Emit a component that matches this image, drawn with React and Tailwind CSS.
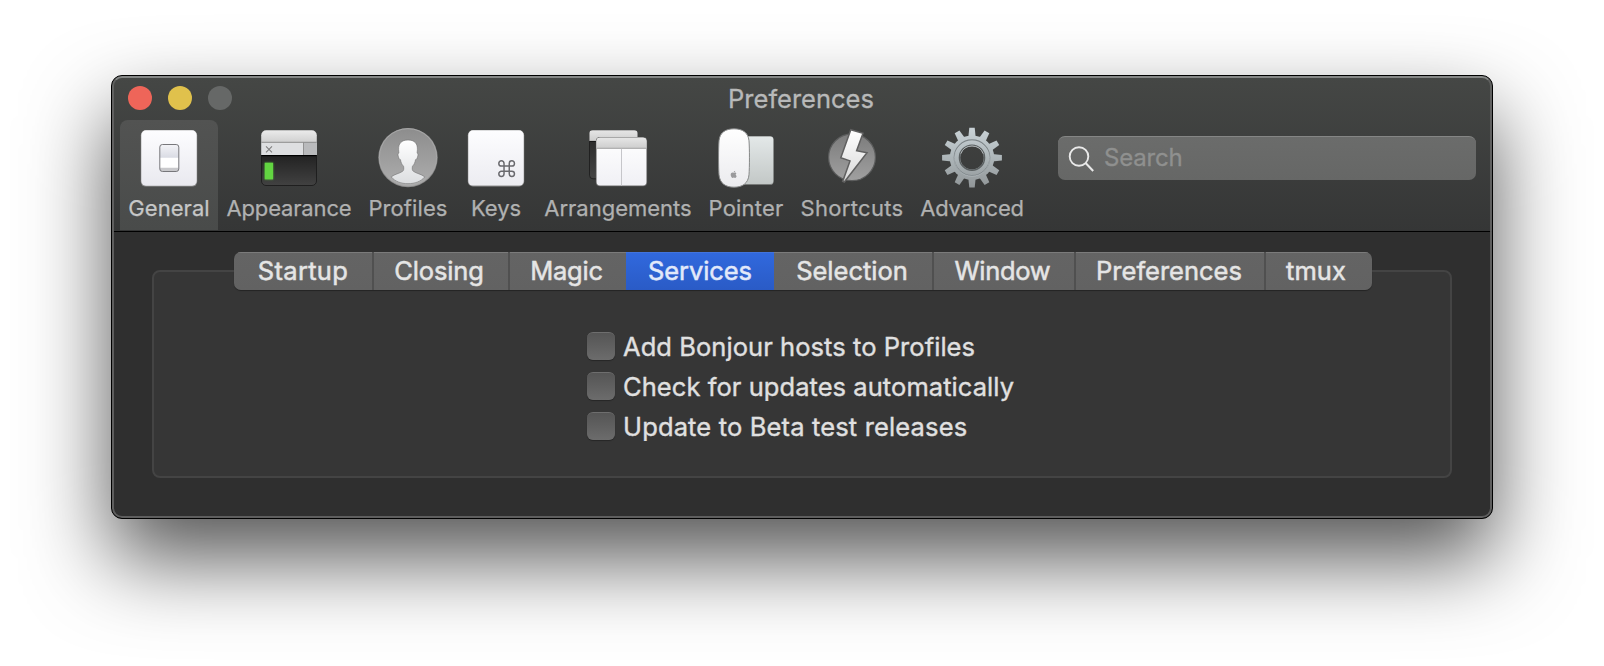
import React from "react";
import { FaApple } from "react-icons/fa";

function Gradient({ id, from, to }) {
  return (
    <linearGradient id={id} x1="0" y1="0" x2="0" y2="1">
      <stop offset="0" stopColor={from} />
      <stop offset="1" stopColor={to} />
    </linearGradient>
  );
}

function IconFrame({ children }) {
  return (
    <svg viewBox="0 0 60 60" className="block h-[60px] w-[60px] shrink-0 overflow-visible" aria-hidden="true">
      {children}
    </svg>
  );
}

function GeneralIcon() {
  return (
    <IconFrame>
      <defs>
        <Gradient id="gen-plate" from="#fdfdff" to="#e9e9ef" />
        <Gradient id="gen-top" from="#f4f4f8" to="#d9dbe3" />
      </defs>
      <rect x="1.8" y="2.2" width="56.4" height="56.4" rx="5" fill="#8f8f8f" />
      <rect x="2.3" y="2.3" width="55.4" height="55.4" rx="4.6" fill="url(#gen-plate)" />
      <rect x="20.8" y="16.5" width="19" height="27" rx="2.6" fill="#fff" />
      <path d="M20.8 29.8V19a2.5 2.5 0 0 1 2.5-2.5h14a2.5 2.5 0 0 1 2.5 2.5v10.800z" fill="url(#gen-top)" />
      <path d="M20.800 39.800h19V41a2.500 2.500 0 0 1-2.500 2.500h-14a2.500 2.500 0 0 1-2.500-2.500z" fill="#c9c9cc" />
      <rect x="20.8" y="16.5" width="19" height="27" rx="2.6" fill="none" stroke="#77777b" strokeWidth="1" />
    </IconFrame>
  );
}

function AppearanceIcon() {
  return (
    <IconFrame>
      <defs>
        <Gradient id="app-title" from="#ececec" to="#cfcfcf" />
        <Gradient id="app-term" from="#222222" to="#424242" />
        <clipPath id="app-clip">
          <rect x="2.2" y="2.3" width="55.6" height="55.4" rx="5" />
        </clipPath>
        <filter id="app-glow" x="-50%" y="-50%" width="200%" height="200%">
          <feGaussianBlur stdDeviation="1.2" />
        </filter>
      </defs>
      <g clipPath="url(#app-clip)">
        <rect x="2" y="2" width="56" height="12.5" fill="url(#app-title)" />
        <rect x="2" y="14" width="56" height="14" fill="#dedfe1" />
        <rect x="44.500" y="14" width="14" height="14" fill="#b9babc" />
        <rect x="2" y="13.800" width="56" height="1" fill="#8d8d8d" />
        <rect x="44" y="14" width="1" height="13" fill="#929292" />
        <rect x="2" y="27" width="56" height="31" fill="url(#app-term)" />
        <rect x="2" y="27" width="56" height="1.200" fill="#000" />
      </g>
      <path d="M7 18.300l6 6M13 18.300l-6 6" stroke="#808080" strokeWidth="1.100" />
      <rect x="5.700" y="34.700" width="8.400" height="16.700" fill="#5fdc3a" opacity="0.6" filter="url(#app-glow)" />
      <rect x="5.700" y="34.700" width="8.400" height="16.700" fill="#62d541" />
      <path d="M2.500 28v25a4.500 4.500 0 0 0 4.500 4.500h46a4.500 4.500 0 0 0 4.500-4.500V28" fill="none" stroke="#1c1c1c" strokeWidth="0.9" />
    </IconFrame>
  );
}

function ProfilesIcon() {
  return (
    <IconFrame>
      <defs>
        <Gradient id="pro-disc" from="#8d8d8d" to="#adadad" />
        <Gradient id="pro-head" from="#ffffff" to="#dcdee0" />
        <clipPath id="pro-clip">
          <circle cx="30" cy="29.300" r="27" />
        </clipPath>
      </defs>
      <circle cx="30" cy="29.600" r="29.700" fill="#8b8b8b" />
      <circle cx="30" cy="29.300" r="28.600" fill="url(#pro-disc)" stroke="#a8a8a8" strokeWidth="1" />
      <g clipPath="url(#pro-clip)">
        <path
          d="M30 12c-6.600 0-9.600 3.600-9.400 9.500l.3 3.600c-1.200.3-1 2.200-.4 4 .5 1.500 1 2.700 2 2.600.5 3 1.300 4.700 3 6.500.6 2.500.3 4.300-1.100 5.300-3 2-7.800 2.600-11.200 5.400C17 53.400 23 55.700 30 55.700s13-2.300 16.800-6.800c-3.400-2.800-8.200-3.400-11.200-5.400-1.400-1-1.700-2.800-1.100-5.300 1.700-1.800 2.500-3.500 3-6.500 1 .1 1.500-1.100 2-2.600.6-1.800.8-3.700-.4-4l.3-3.600c.2-5.900-2.800-9.500-9.400-9.500z"
          fill="url(#pro-head)"
          stroke="#747474"
          strokeWidth="0.6"
        />
      </g>
    </IconFrame>
  );
}

function KeysIcon() {
  return (
    <IconFrame>
      <defs>
        <Gradient id="key-plate" from="#fdfdff" to="#ececf1" />
      </defs>
      <rect x="1.800" y="2.200" width="56.400" height="56.200" rx="5" fill="#8f8f8f" />
      <rect x="2.300" y="2.300" width="55.400" height="55.200" rx="4.600" fill="url(#key-plate)" />
      <g transform="translate(30.200 30.200) scale(0.87)">
        <path
          d="M15 6v12a3 3 0 1 0 3-3H6a3 3 0 1 0 3 3V6a3 3 0 1 0-3 3h12a3 3 0 1 0-3-3"
          fill="none"
          stroke="#6a6a6e"
          strokeWidth="1.700"
        />
      </g>
    </IconFrame>
  );
}

function ArrangementsIcon() {
  return (
    <IconFrame>
      <defs>
        <Gradient id="arr-bar" from="#e6e6e6" to="#cdcdcd" />
        <Gradient id="arr-dark" from="#262626" to="#444444" />
        <Gradient id="arr-page" from="#ffffff" to="#f0f0f5" />
      </defs>
      <rect x="1.500" y="2.500" width="48" height="48.300" rx="3.500" fill="url(#arr-dark)" stroke="#1b1b1b" strokeWidth="0.8" />
      <path d="M1.400 13.200V5.500a3.300 3.300 0 0 1 3.300-3.300h41.600a3.300 3.300 0 0 1 3.300 3.300v7.700z" fill="url(#arr-bar)" />
      <rect x="1.400" y="12.900" width="48" height="1" fill="#111" />
      <rect x="7.900" y="8.900" width="51.200" height="49.400" rx="4" fill="#6f6f6f" />
      <rect x="8.600" y="9.700" width="49.800" height="47.800" rx="3.400" fill="url(#arr-page)" />
      <path d="M8.600 20.300v-7.200a3.400 3.400 0 0 1 3.400-3.400h43a3.400 3.400 0 0 1 3.400 3.400v7.200z" fill="url(#arr-bar)" />
      <rect x="8.600" y="19.800" width="49.800" height="1" fill="#a2a2a2" />
      <rect x="33" y="20.800" width="1" height="36.700" fill="#c6c6ca" />
    </IconFrame>
  );
}

function PointerIcon() {
  return (
    <IconFrame>
      <defs>
        <Gradient id="ptr-pad" from="#e3e8e8" to="#c3c8c7" />
        <Gradient id="ptr-mouse" from="#ffffff" to="#ebebee" />
      </defs>
      <rect x="18" y="8.200" width="39.600" height="48.600" rx="3.400" fill="#8c8f8e" />
      <rect x="18" y="8.400" width="39.300" height="47.600" rx="3.200" fill="url(#ptr-pad)" />
      <path
        d="M18 .8c8.500 0 14.200 3.700 15 12 .6 7 .6 27 0 34-.8 8.500-6.500 12.400-15 12.400S3.800 55.300 3 46.800c-.6-7-.6-27 0-34C3.800 4.500 9.500.8 18 .8z"
        fill="url(#ptr-mouse)"
        stroke="#868888"
        strokeWidth="1"
      />
      <FaApple x="13.600" y="42.200" size="8.200" color="#9a9a9c" />
    </IconFrame>
  );
}

function ShortcutsIcon() {
  return (
    <IconFrame>
      <defs>
        <Gradient id="sc-disc" from="#7c7c7c" to="#a0a0a0" />
        <Gradient id="sc-bolt" from="#ffffff" to="#d8d8d8" />
      </defs>
      <circle cx="30" cy="29.300" r="23.400" fill="url(#sc-disc)" stroke="#5c5d5d" strokeWidth="1.200" />
      <path
        d="M28.800 1.700L41 5.200 34.600 22.700 45 24.800 22.300 54 20.700 53.400 28 32.900 18.800 29.700z"
        fill="url(#sc-bolt)"
        stroke="#606060"
        strokeWidth="1.500"
      />
    </IconFrame>
  );
}

const teeth = Array.from({ length: 12 }, (_, i) => i * 30);

function AdvancedIcon() {
  return (
    <IconFrame>
      <defs>
        <linearGradient id="adv-metal" gradientUnits="userSpaceOnUse" x1="0" y1="0" x2="0" y2="60">
          <stop offset="0" stopColor="#c9d2d6" />
          <stop offset="0.45" stopColor="#b0b9bc" />
          <stop offset="1" stopColor="#909597" />
        </linearGradient>
        <mask id="adv-gear">
          <g fill="#fff">
            <circle cx="30" cy="29.700" r="22.300" />
            {teeth.map((a) => (
              <path key={a} d="M26.300 9.500L27.300-.2h5.400l1 9.700z" transform={`rotate(${a} 30 29.700)`} />
            ))}
          </g>
          <circle cx="30" cy="29.700" r="11.800" fill="#000" />
        </mask>
      </defs>
      <rect x="-1" y="-1" width="62" height="62" fill="url(#adv-metal)" mask="url(#adv-gear)" />
      <circle cx="30" cy="29.700" r="17.800" fill="none" stroke="#7d8588" strokeWidth="1.100" />
      <circle cx="30" cy="30.600" r="17.600" fill="none" stroke="#c2c9cc" strokeWidth="0.5" />
      <circle cx="30" cy="29.700" r="12.600" fill="none" stroke="#5b6061" strokeWidth="1.400" />
      <path d="M18.800 25.800a12 12 0 0 1 22.400 0" fill="none" stroke="#b5bbbd" strokeWidth="0.9" />
    </IconFrame>
  );
}

const toolbarItems = [
  { label: "General", Icon: GeneralIcon, width: "w-[98px]", tracking: "tracking-[0.05px]", selected: true },
  { label: "Appearance", Icon: AppearanceIcon, width: "w-[142px]", tracking: "tracking-[-0.15px]" },
  { label: "Profiles", Icon: ProfilesIcon, width: "w-[96px]", tracking: "tracking-[0.1px]" },
  { label: "Keys", Icon: KeysIcon, width: "w-[80px]", tracking: "tracking-[-0.1px]" },
  { label: "Arrangements", Icon: ArrangementsIcon, width: "w-[164px]", tracking: "tracking-[0px]" },
  { label: "Pointer", Icon: PointerIcon, width: "w-[92px]", tracking: "tracking-[0.2px]" },
  { label: "Shortcuts", Icon: ShortcutsIcon, width: "w-[120px]", tracking: "tracking-[0.3px]" },
  { label: "Advanced", Icon: AdvancedIcon, width: "w-[120px]", tracking: "tracking-[-0.2px]" },
];

const tabs = [
  { label: "Startup", box: "w-[140px] border-r-2 tracking-[0.3px]" },
  { label: "Closing", box: "w-[136px] border-r-2 pr-[4px] tracking-[-0.1px]" },
  { label: "Magic", box: "w-[116px] pr-[3px] tracking-[-0.2px]" },
  { label: "Services", box: "w-[148px] tracking-[-0.1px]", selected: true },
  { label: "Selection", box: "w-[160px] border-r-2 pr-[2px]" },
  { label: "Window", box: "w-[142px] border-r-2 pr-[3px] tracking-[-0.3px]" },
  { label: "Preferences", box: "w-[190px] border-r-2 pr-[2px]" },
  { label: "tmux", box: "w-[106px] pr-[6px] tracking-[0.1px]" },
];

const options = [
  { label: "Add Bonjour hosts to Profiles", tracking: "tracking-[0.06px]" },
  { label: "Check for updates automatically", tracking: "tracking-[0.06px]" },
  { label: "Update to Beta test releases", tracking: "tracking-[0.15px]" },
];

function Toolbar() {
  return (
    <header className="flex h-[156px] shrink-0 flex-col border-b border-black bg-linear-to-b from-[#454745] to-[#353636]">
      <div className="grid h-[44px] shrink-0 grid-cols-[1fr_auto_1fr] items-center">
        <div className="flex gap-4 pl-4">
          <span className="size-6 rounded-full bg-[#ee6559]" />
          <span className="size-6 rounded-full bg-[#e0c14c]" />
          <span className="size-6 rounded-full bg-[#666867]" />
        </div>
        <h1 className="pt-[2px] pr-[2px] text-[25.5px] leading-[30px] text-[#b8b9b9] [-webkit-text-stroke:0.3px]">Preferences</h1>
      </div>
      <div className="flex items-start justify-between pr-4 pl-2">
        <nav className="flex">
          {toolbarItems.map(({ label, Icon, width, tracking, selected }) => (
            <button
              key={label}
              className={`flex h-[110px] flex-col items-center pt-2 ${width} ${
                selected
                  ? "rounded-t-lg bg-linear-to-b from-[#525352] to-[#494b4a] text-[#c6c7c7]"
                  : "text-[#b0b1b1]"
              }`}
            >
              <Icon />
              <span className={`mt-2 text-[22px] leading-6 whitespace-nowrap [-webkit-text-stroke:0.25px] ${tracking}`}>{label}</span>
            </button>
          ))}
        </nav>
        <label className="mt-4 flex h-[44px] w-[418px] items-center rounded-[7px] border-t border-[#858685] bg-linear-to-b from-[#6b6c6b] to-[#666766] pb-[1px] pl-[10px]">
          <svg viewBox="0 0 28 28" className="size-7 shrink-0" fill="none" stroke="#e9e9e9" strokeWidth="1.900">
            <circle cx="11" cy="12.500" r="9.300" />
            <path d="M17.600 19.100l7.600 7.800" strokeWidth="2.100" />
          </svg>
          <span className="ml-[8px] pb-[1px] text-[24px] leading-[40px] tracking-[-0.2px] text-[#8f908f] [-webkit-text-stroke:0.3px]">Search</span>
        </label>
      </div>
    </header>
  );
}

export default function App() {
  return (
    <div className="flex h-[666px] w-[1604px] items-start overflow-hidden bg-white pt-[75px] pl-[111px] font-['Inter','Liberation_Sans',sans-serif]">
      <div className="relative flex h-[444px] w-[1382px] flex-col overflow-hidden rounded-[11px] border border-black bg-[#2f2f2f] shadow-[0_40px_84px_rgba(0,0,0,0.67)]">
        <Toolbar />
        <main className="flex flex-col px-10 pt-5">
          <div className="z-10 ml-[82px] flex h-[38px] self-start overflow-hidden rounded-[7px] bg-linear-to-b from-[#646464] to-[#626262] shadow-[0_1px_1px_rgba(0,0,0,0.35)]">
            {tabs.map(({ label, box, selected }) => (
              <button
                key={label}
                className={`flex h-[38px] items-center justify-center border-[#505050] text-[25.5px] leading-[38px] [-webkit-text-stroke:0.5px] ${box} ${
                  selected
                    ? "bg-linear-to-b from-[#3169de] to-[#2a5bc6] text-[#e2e9fa] shadow-[inset_0_1px_0_#4274dd]"
                    : "text-[#e5e5e5] shadow-[inset_0_1px_0_#7b7b7b]"
                }`}
              >
                {label}
              </button>
            ))}
          </div>
          <section className="-mt-5 h-[208px] rounded-[8px] border-2 border-[#444444] bg-[#363636] pt-[54px] pl-[433px]">
            {options.map(({ label, tracking }) => (
              <label key={label} className="flex h-10 items-center">
                <span className="size-7 rounded-[6px] border-t border-[#6e6e6e] bg-linear-to-b from-[#555555] to-[#6c6c6c] shadow-[0_1px_1px_rgba(0,0,0,0.3)]" />
                <span className={`ml-[8px] pt-[2px] text-[25.5px] leading-[38px] text-[#e0e0e0] [-webkit-text-stroke:0.35px] ${tracking}`}>{label}</span>
              </label>
            ))}
          </section>
        </main>
        <div className="pointer-events-none absolute inset-0 rounded-[10px] border-2 border-[#646464]/90 border-t-[#858786]" />
      </div>
    </div>
  );
}
